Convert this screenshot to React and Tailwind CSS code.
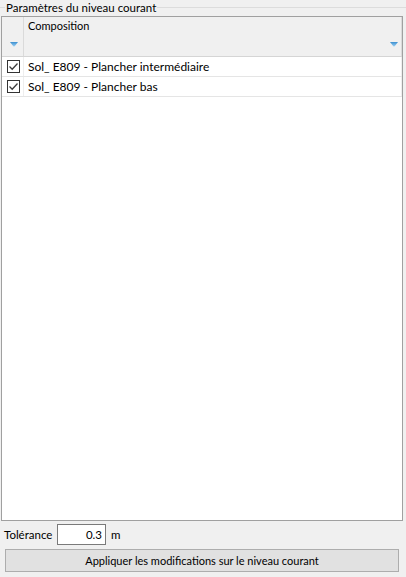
const rows = [
  'Sol_ E809 - Plancher intermédiaire',
  'Sol_ E809 - Plancher bas',
];

function FilterArrow() {
  return (
    <svg width="8" height="5" viewBox="0 0 8 5">
      <defs>
        <linearGradient id="fa" x1="0" y1="0" x2="0" y2="1">
          <stop offset="0" stopColor="#3b8fd0" />
          <stop offset="1" stopColor="#9fd0f2" />
        </linearGradient>
      </defs>
      <path d="M0 0 H8 L4.5 4.5 H3.5 Z" fill="url(#fa)" />
    </svg>
  );
}

function Check() {
  return (
    <span className="w-[13px] h-[13px] border border-[#333] bg-white flex items-center justify-center">
      <svg width="11" height="11" viewBox="0 0 11 11">
        <path d="M1.5 5.5 L4.2 8.2 L9.5 2.5" fill="none" stroke="#3c3c3c" strokeWidth="1.3" />
      </svg>
    </span>
  );
}

export default function App() {
  return (
    <div
      className="w-[406px] h-[577px] bg-[#f0f0f0] text-[11px] text-black flex flex-col overflow-hidden"
      style={{ fontFamily: 'Lato, "Noto Sans", sans-serif' }}
    >
      {/* group title */}
      <div className="h-[16px] flex items-start">
        <div className="w-[5px] mt-[7px] border-t border-[#dcdcdc]" />
        <span className="leading-[15px] px-[1px] text-[11.5px]">Paramètres du niveau courant</span>
        <div className="flex-1 mt-[7px] border-t border-[#dcdcdc]" />
      </div>

      {/* grid */}
      <div className="ml-[1px] w-[402px] h-[505px] border border-[#a0a0a0] bg-white flex flex-col">
        <div className="h-[40px] bg-[#f0f0f0] border-b border-[#d5d5d5] flex shrink-0">
          <div className="w-[22px] border-r border-[#dadada] flex items-end justify-center pb-[9px] pl-[2px]">
            <FilterArrow />
          </div>
          <div className="flex-1 relative px-[4px] border-r border-[#dadada]">
            <div className="leading-[14px] mt-[2px]">Composition</div>
            <div className="absolute right-[3px] bottom-[9px] flex">
              <FilterArrow />
            </div>
          </div>
        </div>
        {rows.map((r) => (
          <div key={r} className="h-[20px] flex border-b border-[#e5e5e5] shrink-0">
            <div className="w-[22px] border-r border-[#eeeeee] flex items-center justify-center pl-[2px]">
              <Check />
            </div>
            <div className="flex-1 px-[4px] leading-[19px] text-[12px] border-r border-[#eeeeee]">{r}</div>
          </div>
        ))}
      </div>

      {/* tolerance */}
      <div className="h-[21px] mt-[3px] flex items-center text-[11.5px]">
        <span className="ml-[4px] w-[53px]">Tolérance</span>
        <div className="w-[49px] h-[21px] border border-[#7a7a7a] bg-white text-right pr-[3px] leading-[19px]">0.3</div>
        <span className="ml-[5px]">m</span>
      </div>

      {/* apply */}
      <button className="mt-[4px] ml-[5px] w-[394px] h-[23px] bg-[#e1e1e1] border border-[#adadad] text-[11px] text-black leading-[21px]">
        Appliquer les modifications sur le niveau courant
      </button>
    </div>
  );
}
